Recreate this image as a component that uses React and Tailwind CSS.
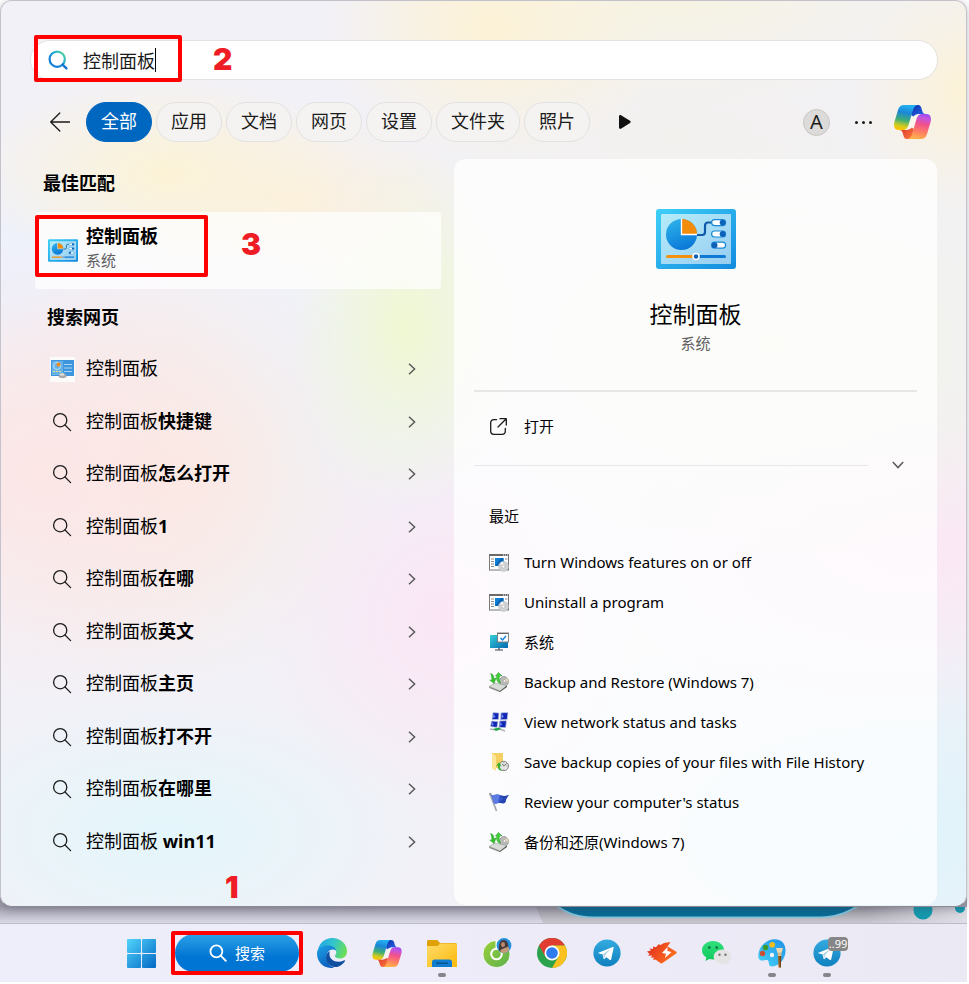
import React from "react";

function SearchIcon({ className }) {
  return (
    <svg className={className} viewBox="0 0 20 20" fill="none" stroke="currentColor" strokeLinecap="round" aria-hidden="true">
      <circle cx="8.2" cy="8.2" r="6.6" />
      <path d="M13 13l5.6 5.6" />
    </svg>
  );
}

function ColorSearchIcon() {
  return (
    <svg className="size-5 shrink-0" viewBox="0 0 20 20" fill="none" strokeLinecap="round" aria-hidden="true">
      <defs>
        <linearGradient id="lens" x1="0" y1="1" x2="1" y2="0">
          <stop offset="0.3" stopColor="#1480d8" />
          <stop offset="0.65" stopColor="#25b0d0" />
          <stop offset="1" stopColor="#5fe08a" />
        </linearGradient>
      </defs>
      <circle cx="9.2" cy="9.2" r="7.6" stroke="url(#lens)" strokeWidth="2.2" />
      <path d="M14.6 14.6l3.8 3.8" stroke="#1673d0" strokeWidth="2.4" />
    </svg>
  );
}

function Chevron({ className }) {
  return (
    <svg className={className} viewBox="0 0 12 12" fill="none" stroke="#5a5a5a" strokeWidth="1.5" aria-hidden="true">
      <path d="M3 .8L8.6 6 3 11.2" />
    </svg>
  );
}

function Copilot({ className }) {
  return (
    <svg className={className} viewBox="0 0 37 34" aria-hidden="true">
      <defs>
        <linearGradient id="cpA" x1="0.5" y1="0" x2="0.3" y2="1">
          <stop offset="0" stopColor="#22b2f2" />
          <stop offset="0.3" stopColor="#1c86d8" />
          <stop offset="0.6" stopColor="#3fae76" />
          <stop offset="0.85" stopColor="#d8cc1c" />
          <stop offset="1" stopColor="#ffc400" />
        </linearGradient>
        <linearGradient id="cpB" x1="0.5" y1="0" x2="0.3" y2="1">
          <stop offset="0" stopColor="#ffb04a" />
          <stop offset="0.3" stopColor="#ff7a66" />
          <stop offset="0.6" stopColor="#f0518e" />
          <stop offset="0.85" stopColor="#c155e0" />
          <stop offset="1" stopColor="#9a4bf0" />
        </linearGradient>
        <linearGradient id="cpC" x1="0" y1="0" x2="1" y2="1">
          <stop offset="0" stopColor="#0a2fa8" />
          <stop offset="1" stopColor="#2a6cf0" />
        </linearGradient>
        <linearGradient id="cpD" x1="0" y1="0" x2="1" y2="1">
          <stop offset="0" stopColor="#ff7a3a" />
          <stop offset="1" stopColor="#d8342f" />
        </linearGradient>
      </defs>
      <path d="M20 0h3.500C26.500 0 27.300 2 28 5c.6 2.500 1.600 4 3.500 4H26c-3 0-5 .6-6.500 2.500L17 10z" fill="url(#cpC)" />
      <path d="M10 0h13.500C20.500.5 19.500 3 18.500 6.500L14.600 19.500c-1.200 4-2.600 5.500-6.100 5.500H5C.8 25-.8 22 .4 17L4 5C5 1.800 6.800 0 10 0z" fill="url(#cpA)" />
      <g transform="rotate(180 18.500 17)">
        <path d="M20 0h3.500C26.500 0 27.300 2 28 5c.6 2.500 1.600 4 3.500 4H26c-3 0-5 .6-6.500 2.500L17 10z" fill="url(#cpD)" />
        <path d="M10 0h13.500C20.500.5 19.500 3 18.500 6.500L14.600 19.500c-1.200 4-2.600 5.500-6.100 5.500H5C.8 25-.8 22 .4 17L4 5C5 1.800 6.800 0 10 0z" fill="url(#cpB)" />
      </g>
      <path d="M20.500 11h3L17 23.500h-3.500z" fill="#fbf6ee" />
    </svg>
  );
}

function ControlPanelIcon({ className }) {
  return (
    <svg className={className} viewBox="0 0 80 60" aria-hidden="true">
      <defs>
        <linearGradient id="frame" x1="0" y1="0" x2="1" y2="1">
          <stop offset="0" stopColor="#3fd0f8" />
          <stop offset="1" stopColor="#128ade" />
        </linearGradient>
        <linearGradient id="face" x1="0" y1="0" x2="1" y2="1">
          <stop offset="0" stopColor="#b4ecfa" />
          <stop offset="1" stopColor="#98cdf0" />
        </linearGradient>
        <linearGradient id="pie" x1="0.3" y1="0" x2="0.7" y2="1">
          <stop offset="0" stopColor="#2cb0ea" />
          <stop offset="1" stopColor="#0875d6" />
        </linearGradient>
      </defs>
      <rect width="80" height="60" rx="3" fill="url(#frame)" />
      <rect x="5" y="5" width="70" height="50" rx="1" fill="url(#face)" />
      <path d="M41 26h5c2 0 3-1 3-3v-6c0-2 1-3.500 3-3.500h5" fill="none" stroke="#0f5aa8" strokeWidth="2.200" />
      <circle cx="25.500" cy="25.500" r="15.500" fill="url(#pie)" />
      <path d="M25.500 25.500V10A15.500 15.500 0 0 1 41 25.500z" fill="#f28c0a" />
      <path d="M25.500 10v15.500H41" fill="none" stroke="#fff" strokeWidth="1.300" />
      <g fill="#fff" stroke="#1789d8" strokeWidth="1.200">
        <rect x="55.600" y="10.600" width="14" height="6" rx="3" />
        <rect x="55.600" y="22" width="14" height="6" rx="3" />
        <rect x="55.600" y="33.200" width="14" height="6" rx="3" />
      </g>
      <g fill="#0d62b8">
        <circle cx="66.600" cy="13.600" r="2.900" />
        <circle cx="66.600" cy="25" r="2.900" />
        <circle cx="58.600" cy="36.200" r="2.900" />
      </g>
      <path d="M11.500 47.500H37" stroke="#f2910f" strokeWidth="3" strokeLinecap="round" />
      <path d="M43 47.500h25.500" stroke="#0f7ad6" strokeWidth="3" strokeLinecap="round" />
      <circle cx="40" cy="47.500" r="3" fill="#0d62b8" stroke="#fff" strokeWidth="1.500" />
    </svg>
  );
}

function WebThumb() {
  return (
    <svg className="size-[25px]" viewBox="0 0 25 25" aria-hidden="true">
      <rect width="25" height="25" fill="#fbfbfb" />
      <rect x="1" y="3" width="23" height="16" fill="#3f96dc" />
      <rect x="2" y="4" width="11" height="14" fill="#66b2ea" />
      <circle cx="7" cy="9" r="3.500" fill="none" stroke="#b9e2fa" />
      <circle cx="8.500" cy="7.500" r="2" fill="#f08a18" />
      <path d="M14 7.500h8M14 11h8M14 14.500h8" stroke="#a5d6f8" strokeWidth="1.200" />
      <path d="M3 14.500h8" stroke="#f5e08a" strokeDasharray="2 1" />
      <path d="M8.500 20c0-3 2-4 4-4s4 1 4 4c-1.500 1.500-6.500 1.500-8 0z" fill="#a8a8a8" />
      <ellipse cx="12" cy="17.500" rx="2.500" ry="1.200" fill="#dcdcdc" />
    </svg>
  );
}

function FeaturesIcon() {
  return (
    <svg className="size-5" viewBox="0 0 20 20" aria-hidden="true">
      <rect x=".5" y="2.500" width="19" height="15.500" fill="#fff" stroke="#777" />
      <path d="M0 3h20" stroke="#6a6a6a" strokeWidth="2" />
      <path d="M14 3h1M16 3h1M18 3h1" stroke="#fff" />
      <path d="M2 7h3M2 9.500h3M2 12h3M2 14.500h3M16 7h2.500" stroke="#8a8a8a" />
      <path d="M6 6h8.500v8H6z" fill="#0f7fd8" />
      <path d="M6 14l6-8h2.500v8z" fill="#0565b8" />
      <circle cx="14.500" cy="14.500" r="5" fill="#d0d3d5" stroke="#b5b8ba" strokeWidth=".5" />
      <path d="M14.500 14.500L11 11.500a5 5 0 0 1 3-2z" fill="#f0f0f0" />
      <circle cx="14.500" cy="14.500" r="1.500" fill="#fff" stroke="#9b9b9b" strokeWidth=".5" />
    </svg>
  );
}

function MonitorIcon() {
  return (
    <svg className="size-5" viewBox="0 0 20 20" aria-hidden="true">
      <defs>
        <linearGradient id="mon" x1="0" y1="0" x2="1" y2="1">
          <stop offset="0" stopColor="#35cfd8" />
          <stop offset="1" stopColor="#0668b0" />
        </linearGradient>
      </defs>
      <rect x="1" y="3" width="18" height="13" rx=".6" fill="url(#mon)" />
      <path d="M9 16h2v2H9z" fill="#7d8790" />
      <path d="M6 18h8" stroke="#5e6870" strokeWidth="1.200" />
      <rect x="8.500" y="1" width="11" height="9" fill="#fff" stroke="#777" strokeWidth=".9" />
      <path d="M8.500 1.500h11" stroke="#666" />
      <path d="M11.500 6l2 2 3.500-4" fill="none" stroke="#1583da" strokeWidth="1.500" />
    </svg>
  );
}

function BackupIcon() {
  return (
    <svg className="size-5" viewBox="0 0 20 20" aria-hidden="true">
      <ellipse cx="15" cy="9.500" rx="4.500" ry="5" fill="#b9bbb8" stroke="#7e817d" strokeWidth=".6" />
      <path d="M15 9.500l3-4 1.400 4z" fill="#ecd9b8" />
      <circle cx="15.500" cy="9" r="1.300" fill="#fff" stroke="#777" strokeWidth=".4" />
      <path d="M0 14.500l6-3.500 12 2.500-7 5.500z" fill="#d9dbd8" stroke="#8b8e8a" strokeWidth=".5" />
      <path d="M0 14.500l11 4.500v1.200L.5 16z" fill="#7d807b" />
      <path d="M11 19l7-5.500V15l-7 5z" fill="#50534f" />
      <path d="M1.500 1.500C4 2 5 4 5 7l2-1-2 5.500L.8 8l2 .2C3 5 2.500 3 1.500 1.500z" fill="#35c52e" stroke="#169016" strokeWidth=".5" />
      <path d="M10 11C7.500 9 7 6 8 3.500L6.500 4 9.500.5 13 4l-2-.4C9.800 6 9.800 8.500 11.500 11z" fill="#42d038" stroke="#169016" strokeWidth=".5" />
    </svg>
  );
}

function NetworkIcon() {
  return (
    <svg className="size-5" viewBox="0 0 20 20" aria-hidden="true">
      <g fill="#1226b4" stroke="#c4cbe2" strokeWidth=".7">
        <path d="M4 .5l6 .5-.5 6.500L3 7.500z" />
        <path d="M12 .8l7-.3-.8 7-6.700.3z" />
        <path d="M2.500 9l6.500.5L8 15.500l-6.500-1z" />
        <path d="M10.500 9l7-.3-.8 7-6.700-.4z" />
      </g>
      <path d="M4.500 1.500l2 3.500-2.700 1zM12.800 1.700l2 3-2.500 1.800zM3 10l2 3-2.300.2zM11.300 9.800l2 3-2.300 1z" fill="#6f8cf2" />
      <path d="M1 17c4 .8 7 .8 10 0l5 2" fill="none" stroke="#adb3b0" strokeWidth="1.500" />
      <path d="M4 17l6-1.500 2 1.500-5 2z" fill="#1fa54a" />
    </svg>
  );
}

function FileHistoryIcon() {
  return (
    <svg className="size-5" viewBox="0 0 20 20" aria-hidden="true">
      <path d="M3 1h10c.6 0 1 .4 1 1v14H3z" fill="#f6cf62" />
      <path d="M3 1l4 3v15l-4-2.500z" fill="#fde59a" />
      <circle cx="14.800" cy="14" r="4.700" fill="#e4e6e4" stroke="#858885" strokeWidth="1" />
      <path d="M14.800 14l3-2.500M14.800 14l-1.500-2M14.800 10.500v.8M14.800 17v.6M11.500 14h.6M17.600 14h.6" stroke="#555" strokeWidth=".8" />
      <path d="M13 19c-3.500-.5-4.500-3-4-5.500l-2 .8 3-4 2.500 3.500-1.700-.4c-.3 2 .5 4 2.200 5.600z" fill="#2fb02f" />
    </svg>
  );
}

function FlagIcon() {
  return (
    <svg className="size-5" viewBox="0 0 20 20" aria-hidden="true">
      <path d="M1 2l6.500 17" stroke="#a0a4ad" strokeWidth="1.600" />
      <circle cx="1.200" cy="2" r="1.200" fill="#9a9ea8" />
      <path d="M2 2.500c3 2 5-1 8.500.5 3 1.300 6 1.500 9.500 0-2 2-3 4-3.800 7.500-3 2-5.500-.5-7 .5-2 1-3.200 1-4.200.3z" fill="#3558cc" />
      <path d="M2 2.500c3 2 5-1 8.500.5L9 11c-2 1-3.200 1-4.200.3z" fill="#5c7ce2" />
      <path d="M10.500 3L14 7l-4.800 4c1.500-1 4 1.500 7-.5C17 7 18 5 20 3c-3.500 1.500-6.500 1.300-9.500 0z" fill="#2745ae" />
    </svg>
  );
}

function WindowsLogo() {
  return (
    <svg className="size-[29px]" viewBox="0 0 29 29" aria-hidden="true">
      <defs>
        <linearGradient id="win" gradientUnits="userSpaceOnUse" x1="0" y1="0" x2="29" y2="29">
          <stop offset="0" stopColor="#50d4fc" />
          <stop offset="1" stopColor="#0468c4" />
        </linearGradient>
      </defs>
      <g fill="url(#win)">
        <rect width="14" height="14" rx="1" />
        <rect x="15" width="14" height="14" rx="1" />
        <rect y="15" width="14" height="14" rx="1" />
        <rect x="15" y="15" width="14" height="14" rx="1" />
      </g>
    </svg>
  );
}

function EdgeLogo() {
  return (
    <svg className="size-[30px]" viewBox="0 0 30 30" aria-hidden="true">
      <defs>
        <linearGradient id="edTop" x1="0" y1="0.300" x2="1" y2="0.600">
          <stop offset="0" stopColor="#1fa7e8" />
          <stop offset="0.500" stopColor="#34c6c8" />
          <stop offset="1" stopColor="#6cdf50" />
        </linearGradient>
        <linearGradient id="edLeft" x1="0" y1="0" x2="0.500" y2="1">
          <stop offset="0" stopColor="#1da2e4" />
          <stop offset="1" stopColor="#0a5fc0" />
        </linearGradient>
      </defs>
      <path d="M1 11.500C2.500 5 8.200 0 15 0c8.500 0 15 6 15 13.200 0 5-3.500 7.300-7 7.300-3.200 0-5-1-5-2.400 0-1 1.300-1.600 1.300-4 0-3.300-3.600-6.300-8.800-6.300-4.200 0-7.500 1.500-9.500 3.700z" fill="url(#edTop)" />
      <path d="M.2 13.500C1.500 9.500 5.500 7.300 10.500 7.300c4.600 0 8.300 2.300 8.700 5.500-1-.8-2.200-1.300-3.500-1.300C12 11.500 9.500 15 9.500 19c0 5 3.500 9 7.500 10.800C8 31.300 0 25 0 15.500z" fill="url(#edLeft)" />
      <path d="M12.500 13c-3 2.500-4.500 6-2.500 10.500 2 4.400 7 6.500 11 5.200 3-1 5.300-3 6.800-5.200.5-.8-.2-1.400-1-1-1.600.8-3.300 1.200-5.300 1.200-5.300 0-9-3.200-9-7.200 0-1.400 0-2.700 0-3.500z" fill="#0f4fa0" />
    </svg>
  );
}

function FolderLogo() {
  return (
    <svg className="h-[27px] w-[30px]" viewBox="0 0 30 27" aria-hidden="true">
      <defs>
        <linearGradient id="fold" x1="0" y1="0" x2="1" y2="1">
          <stop offset="0" stopColor="#ffdc6a" />
          <stop offset="1" stopColor="#fbb90c" />
        </linearGradient>
      </defs>
      <path d="M0 1.500C0 .7.700 0 1.500 0h8c.8 0 1.300.3 1.800.9L13 3h15c1 0 2 .6 2 1.500V9H0z" fill="#e0a008" />
      <path d="M0 6h9.500c1 0 1.600-.3 2.200-1L13 3.500h15.500c.8 0 1.500.7 1.500 1.500v22H0z" fill="url(#fold)" />
      <path d="M5 27v-5c0-1.500 1-2.500 2.500-2.500h15c1.500 0 2.500 1 2.500 2.500v5z" fill="#0f7cd0" />
      <path d="M9 23.200h12" stroke="#084c88" strokeWidth="1.300" />
    </svg>
  );
}

function GreenLogo() {
  return (
    <svg className="size-[30px]" viewBox="0 0 30 30" aria-hidden="true">
      <defs>
        <linearGradient id="grn" x1="0" y1="0" x2="1" y2="1">
          <stop offset="0" stopColor="#9cd03a" />
          <stop offset="1" stopColor="#5cb04e" />
        </linearGradient>
      </defs>
      <circle cx="14.500" cy="16" r="13.600" fill="url(#grn)" stroke="#fff" strokeWidth=".8" />
      <circle cx="14.500" cy="16" r="5.300" fill="none" stroke="#fff" strokeWidth="2" />
      <path d="M14.500 2v9" stroke="#fff" strokeWidth="2" />
      <circle cx="22" cy="7.500" r="7.400" fill="#2590de" />
      <path d="M17 12c-.5-5 .5-10 4.500-10s4.500 3 5 8l-2 4h-6z" fill="#473b3c" />
      <ellipse cx="21" cy="6.500" rx="2" ry="2.600" fill="#bd8a6c" />
      <path d="M18 12.500c2-2 6-2.500 8-4l1.500 3c-1 2-3 3.400-5.500 3.400s-3.500-1-4-2.400z" fill="#c49a78" />
    </svg>
  );
}

function ChromeLogo() {
  return (
    <svg className="size-[30px]" viewBox="0 0 30 30" aria-hidden="true">
      <circle cx="15" cy="15" r="15" fill="#2ba24c" />
      <path d="M2 7.500A15 15 0 0 1 28 7.500H15L8.500 18.800z" fill="#e03c31" />
      <path d="M28 7.500A15 15 0 0 1 15 30l6.500-11.200L15 7.500z" fill="#fcc120" />
      <circle cx="15" cy="15" r="7.500" fill="#fff" />
      <circle cx="15" cy="15" r="5.800" fill="#2f7cf0" />
    </svg>
  );
}

function TelegramLogo() {
  return (
    <svg className="size-[28px]" viewBox="0 0 28 28" aria-hidden="true">
      <defs>
        <linearGradient id="tel" x1="0" y1="0" x2="0" y2="1">
          <stop offset="0" stopColor="#34abe0" />
          <stop offset="1" stopColor="#0f80be" />
        </linearGradient>
      </defs>
      <circle cx="14" cy="14" r="13.600" fill="url(#tel)" />
      <path d="M5.500 13.700L19.600 8c.8-.3 1.200.2 1 1l-2.400 11.200c-.2.900-.8 1-1.500.6l-3.500-2.600-1.800 1.800c-.3.300-.6.400-.8-.2l-1-4.300-4-1.200c-.7-.2-.7-.5-.1-.6z" fill="#fff" />
      <path d="M10 15.200l7.500-5.200-5.600 6.200-.4 3z" fill="#a9cfe6" />
    </svg>
  );
}

function BoltLogo() {
  return (
    <svg className="h-[22px] w-[30px]" viewBox="0 0 30 22" aria-hidden="true">
      <defs>
        <linearGradient id="bolt" x1="0" y1="0" x2="1" y2="0.500">
          <stop offset="0" stopColor="#dd2a20" />
          <stop offset="1" stopColor="#ff6f1c" />
        </linearGradient>
      </defs>
      <path d="M0 9.500l4-1-1.500-2L6 7V4.500l3 .8 2.500-3 2 .7L17 1l6.500-1-3 4.500 8.500 5c1 .7 1 1.500.2 2L15.500 21c-.8.600-1.500.6-2.200.1L8.500 17.500l-2.500.6 1-2.600-3 .2 1-2.200-4 .2L2.500 12z" fill="url(#bolt)" />
      <path d="M20.500 5L15 11l4 .8L18 16l6.500-6-4-1z" fill="#fff" />
    </svg>
  );
}

function WeChatLogo() {
  return (
    <svg className="h-[26px] w-[30px]" viewBox="0 0 30 26" aria-hidden="true">
      <defs>
        <linearGradient id="wc" x1="0" y1="0" x2="0" y2="1">
          <stop offset="0" stopColor="#2fe07c" />
          <stop offset="1" stopColor="#12c95e" />
        </linearGradient>
      </defs>
      <path d="M11 1c6 0 11 4 11 9.200s-5 9.300-11 9.300c-1.300 0-2.500-.2-3.700-.5L3.500 21l.8-3.500C1.700 15.800 0 13.200 0 10.200 0 5 5 1 11 1z" fill="url(#wc)" />
      <circle cx="7.300" cy="7.500" r="1.500" fill="#14804a" />
      <circle cx="14.700" cy="7.500" r="1.500" fill="#14804a" />
      <path d="M20.500 9.500c4.800 0 8.800 3.200 8.800 7.300 0 2.300-1.200 4.200-3.100 5.500l.6 2.700-3-1.500c-1 .3-2.100.5-3.300.5-4.900 0-8.800-3.200-8.800-7.200s3.900-7.300 8.800-7.300z" fill="#e4e4e4" />
      <circle cx="17.500" cy="14.800" r="1.200" fill="#777" />
      <circle cx="23.500" cy="14.800" r="1.200" fill="#777" />
    </svg>
  );
}

function PaintLogo() {
  return (
    <svg className="size-[30px]" viewBox="0 0 30 30" aria-hidden="true">
      <defs>
        <linearGradient id="pnt" x1="1" y1="0" x2="0" y2="1">
          <stop offset="0" stopColor="#1c8fe6" />
          <stop offset="1" stopColor="#4ad6fa" />
        </linearGradient>
      </defs>
      <path d="M15 1.500C22 0 29 4 28.500 13c-.3 8.500-6 15-13.500 15.500-4 0-2.500-4-4-6S4 25 1.700 20.500C-.5 13 6 3 15 1.500z" fill="url(#pnt)" />
      <circle cx="15" cy="17" r="2.200" fill="#eef2fa" />
      <circle cx="15.200" cy="6.800" r="2.800" fill="#f5bd1a" />
      <circle cx="8.500" cy="9.500" r="2.700" fill="#3c9a28" />
      <circle cx="5.500" cy="15.500" r="2.700" fill="#cc5030" />
      <path d="M19 10h7l-1.500 5h-4z" fill="#eed9b0" />
      <path d="M20.800 14.500h3.600v4h-3.600z" fill="#d8b98c" />
      <path d="M21 18h3.200l-.4 11.500h-2.200z" fill="#a0601c" />
      <path d="M22.800 18H24.200l-.4 11.500h-1z" fill="#74400c" />
    </svg>
  );
}

const filters = ["应用", "文档", "网页", "设置", "文件夹", "照片"];

const webResults = [
  { base: "控制面板", extra: "", thumb: true },
  { base: "控制面板", extra: "快捷键" },
  { base: "控制面板", extra: "怎么打开" },
  { base: "控制面板", extra: "1" },
  { base: "控制面板", extra: "在哪" },
  { base: "控制面板", extra: "英文" },
  { base: "控制面板", extra: "主页" },
  { base: "控制面板", extra: "打不开" },
  { base: "控制面板", extra: "在哪里" },
  { base: "控制面板 ", extra: "win11" },
];

const recents = [
  { label: "Turn Windows features on or off", Icon: FeaturesIcon },
  { label: "Uninstall a program", Icon: FeaturesIcon },
  { label: "系统", Icon: MonitorIcon },
  { label: "Backup and Restore (Windows 7)", Icon: BackupIcon },
  { label: "View network status and tasks", Icon: NetworkIcon },
  { label: "Save backup copies of your files with File History", Icon: FileHistoryIcon },
  { label: "Review your computer's status", Icon: FlagIcon },
  { label: "备份和还原(Windows 7)", Icon: BackupIcon },
];

const apps = [
  { name: "Edge", icon: <EdgeLogo /> },
  { name: "Copilot", icon: <Copilot className="h-[27px] w-[30px]" /> },
  { name: "Explorer", icon: <FolderLogo />, running: true },
  { name: "Browser", icon: <GreenLogo /> },
  { name: "Chrome", icon: <ChromeLogo /> },
  { name: "Telegram", icon: <TelegramLogo /> },
  { name: "Bolt", icon: <BoltLogo /> },
  { name: "WeChat", icon: <WeChatLogo /> },
  { name: "Paint", icon: <PaintLogo />, running: true },
  { name: "Telegram 2", icon: <TelegramLogo />, running: true, badge: "..99" },
];

function Mark({ className, children }) {
  return (
    <span className={`pointer-events-none absolute font-[Inter] text-[30px] leading-8 font-black text-[#ee1c25] ${className}`}>
      {children}
    </span>
  );
}

function Frame({ className }) {
  return <span className={`pointer-events-none absolute z-10 rounded-[2px] border-4 border-[#fe0000] ${className}`} />;
}

function SearchBar() {
  return (
    <div className="relative mr-7 ml-[29px] flex h-10 items-center gap-[15px] rounded-full border border-[#e4e2e0] bg-white pl-[17px]">
      <ColorSearchIcon />
      <input aria-label="搜索" defaultValue="控制面板" className="h-8 min-w-0 flex-1 bg-transparent text-lg leading-6 text-[#1b1b1b] outline-none" />
      <span className="absolute top-[7px] left-[124px] h-6 w-px bg-black" />
      <Frame className="-top-[6px] left-[3px] h-[47px] w-[148px]" />
      <Mark className="top-[2px] left-[182px]">2</Mark>
    </div>
  );
}

function FilterBar() {
  return (
    <div className="mt-[22px] flex items-center pr-[35px] pl-[49px]">
      <button aria-label="返回" className="mr-4 flex">
        <svg className="size-5" viewBox="0 0 20 20" fill="none" stroke="#1b1b1b" strokeWidth="1.300" strokeLinecap="round" strokeLinejoin="round" aria-hidden="true">
          <path d="M9.800 1L.7 10l9.100 9M.7 10h18.800" />
        </svg>
      </button>
      <div className="flex gap-1">
        <button className="h-10 rounded-full border border-[#0067c0] bg-[#0067c0] px-3.5 pb-0.5 text-lg leading-6 text-white">全部</button>
        {filters.map((f) => (
          <button key={f} className="h-10 rounded-full border border-[#e3e2e2] bg-[#f4f3f2] px-3.5 pb-0.5 text-lg leading-6 text-[#1b1b1b]">{f}</button>
        ))}
      </div>
      <button aria-label="更多筛选" className="ml-[29px] flex">
        <svg className="h-4 w-3" viewBox="0 0 12 16" aria-hidden="true">
          <path d="M0 2.500C0 1 1.300.6 2.400 1.400l8.600 5.400c.9.600.9 1.600 0 2.200l-8.600 5.400C1.300 15.200 0 14.800 0 13.500z" fill="#111" />
        </svg>
      </button>
      <button className="ml-auto size-[27px] rounded-full border border-[#c9c7c5] bg-[#dddbd9] text-xl leading-6 text-[#1b1b1b]">A</button>
      <button aria-label="更多" className="ml-[25px] flex items-center gap-[4px]">
        <i className="size-[3px] rounded-full bg-[#1b1b1b]" />
        <i className="size-[3px] rounded-full bg-[#1b1b1b]" />
        <i className="size-[3px] rounded-full bg-[#1b1b1b]" />
      </button>
      <button aria-label="Copilot" className="ml-[22px] flex">
        <Copilot className="h-[34px] w-[37px]" />
      </button>
    </div>
  );
}

function ResultList() {
  return (
    <section className="w-[406px] shrink-0">
      <h2 className="mt-3 pl-2 text-lg leading-6 font-bold text-black">最佳匹配</h2>
      <button className="relative mt-[17px] flex h-[77px] w-full items-start rounded-[4px] bg-white/70 pt-3 pl-[13px] text-left">
        <span className="absolute top-6 left-0 h-7 w-[3px] rounded-full bg-[#0067c0]" />
        <ControlPanelIcon className="mt-[15px] h-[23px] w-[30px]" />
        <span className="ml-2 flex flex-col">
          <span className="text-lg leading-6 font-bold text-black">控制面板</span>
          <span className="text-[15px] leading-6 text-[#606060]">系统</span>
        </span>
        <Frame className="top-[3px] left-0 h-[62px] w-[173px]" />
        <Mark className="top-[16px] left-[206px]">3</Mark>
      </button>
      <h2 className="mt-4 pl-3 text-lg leading-6 font-bold text-black">搜索网页</h2>
      <ul className="mt-[13px] grid h-[525px] auto-rows-fr">
        {webResults.map((r, i) => (
          <li key={i} className="flex">
            <button className="flex w-full items-center pr-[23px] pl-[13px] text-left">
              <span className="flex w-7 justify-center pt-0.5 text-[#1b1b1b]">
                {r.thumb ? <WebThumb /> : <SearchIcon className="size-5 stroke-[1.3]" />}
              </span>
              <span className="ml-2.5 flex-1 text-lg leading-6 whitespace-pre text-black">
                {r.base}
                <b>{r.extra}</b>
              </span>
              <Chevron className="mt-0.5 size-3" />
            </button>
          </li>
        ))}
      </ul>
    </section>
  );
}

function DetailPanel() {
  return (
    <section className="flex min-w-0 flex-1 flex-col rounded-xl bg-white/75 px-5 pb-[43px]">
      <div className="mt-[50px] flex flex-col items-center">
        <ControlPanelIcon className="h-[60px] w-20" />
        <h1 className="mt-[29px] text-[23px] leading-8 text-black">控制面板</h1>
        <p className="mt-px text-[15px] leading-6 text-[#606060]">系统</p>
      </div>
      <hr className="mt-[35px] border-t-2 border-[#e7e7e7]" />
      <button className="mt-[22px] flex items-center gap-[17px] pl-4 text-[15px] leading-6 text-black">
        <svg className="size-[17px]" viewBox="0 0 17 17" fill="none" stroke="#1b1b1b" strokeWidth="1.300" strokeLinecap="round" strokeLinejoin="round" aria-hidden="true">
          <path d="M6.500 1.700H3.700a3 3 0 0 0-3 3v8.600a3 3 0 0 0 3 3h8.600a3 3 0 0 0 3-3v-2.800M10 .7h6.300V7M16 1L8 9" />
        </svg>
        打开
      </button>
      <div className="mt-4 flex items-center">
        <hr className="mr-6 flex-1 border-t border-[#e7e7e7]" />
        <button aria-label="展开" className="mr-[13px] flex h-[22px] items-center">
          <Chevron className="size-3 rotate-90" />
        </button>
      </div>
      <h2 className="mt-7 pl-[15px] text-[15px] leading-6 text-black">最近</h2>
      <ul className="mt-[14px] pl-[15px]">
        {recents.map(({ label, Icon }) => (
          <li key={label}>
            <button className="flex h-10 items-center gap-[15px] text-[15px] leading-6 text-black">
              <Icon />
              {label}
            </button>
          </li>
        ))}
      </ul>
    </section>
  );
}

function Wallpaper() {
  return (
    <div className="relative -mt-3 h-7 overflow-hidden bg-linear-to-b from-[#a09eac] from-40% to-[#d9d8e6]">
      <svg className="absolute top-3 right-0 h-4 w-[431px]" viewBox="0 0 431 16" aria-hidden="true">
        <defs>
          <linearGradient id="desk" x1="0" y1="0" x2="0" y2="1">
            <stop offset="0" stopColor="#96949e" />
            <stop offset="1" stopColor="#c8c7cf" />
          </linearGradient>
          <linearGradient id="light" x1="0" y1="0" x2="1" y2="0">
            <stop offset="0" stopColor="#e2e1ea" stopOpacity="0" />
            <stop offset="1" stopColor="#e2e1ea" stopOpacity=".9" />
          </linearGradient>
        </defs>
        <path d="M0 0h431v16H7C4 10 2 5 0 0z" fill="url(#desk)" />
        <path d="M330 0h101v16H330z" fill="url(#light)" />
        <path d="M21 0c10 7 20 11 34 11h230c14 0 26-4 37-11z" fill="#7ec4dc" />
        <path d="M24 0c10 6 19 9.500 32 9.500h228c13 0 25-4 34-9.500z" fill="#076a94" />
        <circle cx="387" cy="3" r="9.500" fill="#149aae" />
        <circle cx="424" cy="1" r="5" fill="#149aae" />
      </svg>
    </div>
  );
}

function Taskbar() {
  return (
    <nav className="relative z-20 flex h-[59px] items-center justify-center border-t border-[#bdbbc9] bg-linear-to-r from-[#eeeefb] to-[#ebe9f4] pl-3.5">
      <button aria-label="开始" className="mr-[19px] flex">
        <WindowsLogo />
      </button>
      <div className="relative mr-[5px]">
        <button className="flex h-[38px] w-[124px] items-center justify-center gap-2 rounded-full bg-linear-to-b from-[#2ba2e6] to-[#0075d4] to-60% text-[15px] leading-6 text-white">
          <SearchIcon className="size-[18px] stroke-2" />
          搜索
        </button>
        <Frame className="-top-[3px] -left-1 h-11 w-[132px]" />
        <Mark className="-top-[63px] left-[50px]">1</Mark>
      </div>
      {apps.map((a) => (
        <button key={a.name} aria-label={a.name} className="relative flex h-14 w-[55px] items-center justify-center">
          {a.icon}
          {a.badge && (
            <span className="absolute top-[12px] left-[29px] h-[14px] w-5 rounded-[4px] bg-[#868686] text-center text-[11px] leading-[14px] text-white">{a.badge}</span>
          )}
          {a.running && <span className="absolute bottom-1 left-6 h-1 w-2 rounded-full bg-[#85858c]" />}
        </button>
      ))}
    </nav>
  );
}

export default function App() {
  return (
    <div className="min-h-screen bg-white pr-0.5 font-['Noto_Sans','Noto_Sans_CJK_SC',sans-serif]">
      <main className="relative z-10 rounded-xl border border-[#c4c3cc] border-b-[#8b8a92] bg-[#f2f1f7] bg-[radial-gradient(18%_15%_at_51%_3%,#fcf2d6,transparent),radial-gradient(34%_12%_at_70%_0%,#f6f3e3,transparent),radial-gradient(12%_14%_at_100%_10%,#fcf2d6,transparent),radial-gradient(20%_11%_at_17%_19%,#fcf3d6,transparent),radial-gradient(18%_10%_at_31%_22%,#fbf0de,transparent),radial-gradient(12%_20%_at_42%_36%,#eff8d2,transparent),radial-gradient(30%_12%_at_70%_15%,#f3f1ee,transparent),radial-gradient(26%_26%_at_4%_52%,#fce6e6,transparent),radial-gradient(24%_24%_at_18%_52%,#fbeae2,transparent),radial-gradient(20%_22%_at_46%_68%,#fbe6f5,transparent),radial-gradient(20%_26%_at_32%_48%,#edf2fb,transparent),radial-gradient(28%_16%_at_17%_92%,#e3f6fb,transparent),radial-gradient(20%_14%_at_0%_32%,#ecf1fd,transparent),radial-gradient(40%_24%_at_80%_38%,#f1f4e8,transparent),radial-gradient(34%_20%_at_94%_60%,#fbe7f4,transparent),radial-gradient(50%_26%_at_94%_92%,#e0f3fa,transparent)] pt-[39px] pb-px shadow-[0_2px_8px_rgba(60,58,80,0.35)]">
        <SearchBar />
        <FilterBar />
        <div className="mt-[17px] flex gap-[13px] pr-[29px] pl-[34px]">
          <ResultList />
          <DetailPanel />
        </div>
      </main>
      <Wallpaper />
      <Taskbar />
    </div>
  );
}
